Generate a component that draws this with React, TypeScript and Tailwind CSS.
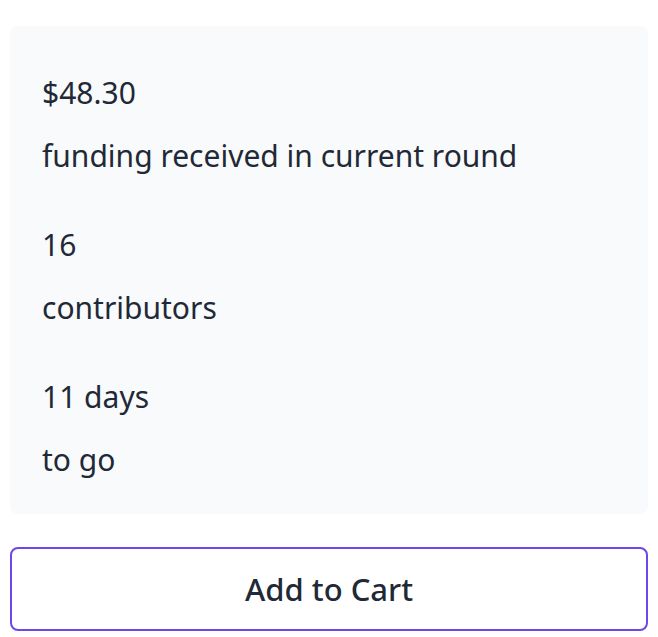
export default function App() {
  const items = [
    { value: "$48.30", label: "funding received in current round" },
    { value: "16", label: "contributors" },
    { value: "11 days", label: "to go" },
  ];
  return (
    <div
      className="px-[10px] pt-[26px] text-[#1f2937]"
      style={{ fontFamily: '"Noto Sans", "Open Sans", sans-serif' }}
    >
      <div className="flex flex-col gap-[44px] rounded-[8px] bg-[#f9fafb] px-[32px] pt-[44px] pb-[32px]">
        {items.map((it) => (
          <div key={it.value} className="flex flex-col gap-[18px]">
            <p className="text-[30px] leading-[45px]">{it.value}</p>
            <p className="text-[30px] leading-[45px]">{it.label}</p>
          </div>
        ))}
      </div>
      <button className="mt-[33px] flex h-[84px] w-full items-center justify-center rounded-[8px] border-2 border-[#6d46ec] bg-white text-[31px] font-medium text-[#1f2937]">
        Add to Cart
      </button>
    </div>
  );
}
